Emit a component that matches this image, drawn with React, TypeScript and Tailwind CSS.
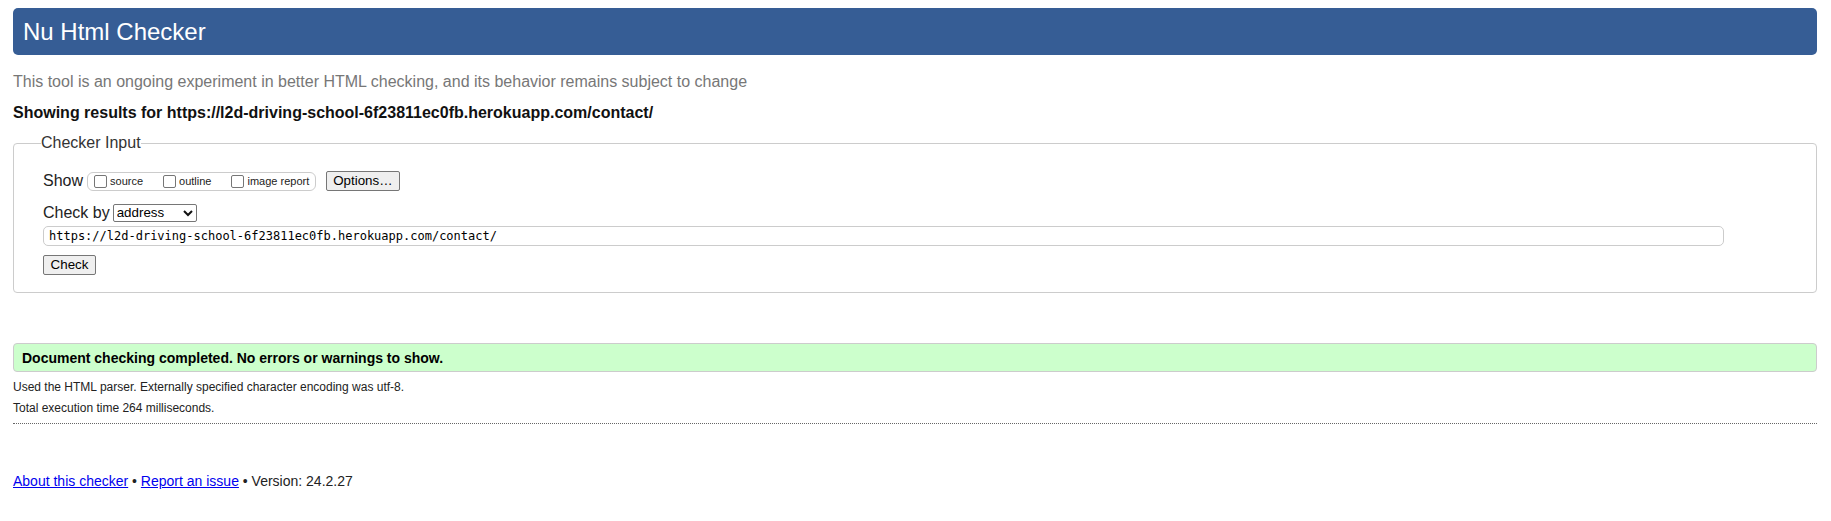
import { useState } from "react";

const checkUrl = "https://l2d-driving-school-6f23811ec0fb.herokuapp.com/contact/";

const showOptions = ["source", "outline", "image report"];

function ShowBox() {
  const [checked, setChecked] = useState<Record<string, boolean>>({});

  return (
    <div className="flex h-[19px] items-center gap-[20px] rounded-[6px] border border-[#cccccc] pl-[6px] pr-[6px]">
      {showOptions.map((name) => (
        <label key={name} className="flex items-center gap-[3px] text-[11px] leading-[13px] text-[#222]">
          <input
            type="checkbox"
            checked={!!checked[name]}
            onChange={() => setChecked((c) => ({ ...c, [name]: !c[name] }))}
            className="h-[13px] w-[13px] appearance-none rounded-[2px] border border-[#767676] bg-white"
          />
          {name}
        </label>
      ))}
    </div>
  );
}

export default function App() {
  const [url, setUrl] = useState(checkUrl);

  return (
    <div className="min-h-[521px] bg-white pl-[13px] pr-[14px] font-['Liberation_Sans',Arial,sans-serif] text-[#222]">
      <header className="mt-[8px] flex h-[47px] items-center rounded-[5px] bg-[#365d95] pl-[10px]">
        <h1 className="text-[24px] leading-[28px] text-white">Nu Html Checker</h1>
      </header>

      <p className="mt-[18px] text-[16px] leading-[18px] text-[#777]">
        This tool is an ongoing experiment in better HTML checking, and its behavior remains subject to change
      </p>
      <p className="mt-[13px] text-[16px] font-bold leading-[18px] text-[#111]">
        Showing results for {checkUrl}
      </p>

      <fieldset className="mt-[12px] rounded-[4px] border border-[#cccccc] pb-[17px] pl-[29px] pr-[29px] pt-[19px]">
        <legend className="-ml-[2px] text-[16px] leading-[18px] text-[#333]">Checker Input</legend>

        <div className="flex h-[20px] items-center">
          <span className="text-[16px] leading-[18px]">Show</span>
          <div className="ml-[4px]">
            <ShowBox />
          </div>
          <button
            type="button"
            className="ml-[10px] h-[20px] rounded-[2px] border border-[#767676] bg-[#efefef] px-[6px] text-[13.33px] leading-[16px] text-black"
          >
            Options…
          </button>
        </div>

        <div className="mt-[13px] flex h-[18px] items-center">
          <span className="text-[16px] leading-[18px]">Check by</span>
          <div className="relative ml-[3px] h-[18px] w-[84px] leading-[18px]">
            <select className="block h-[18px] w-full appearance-none rounded-[2px] border border-[#767676] bg-white pl-[3px] text-[13.33px] leading-[16px] text-black">
              <option>address</option>
              <option>file upload</option>
              <option>text input</option>
            </select>
            <svg
              className="pointer-events-none absolute right-[4px] top-[6px]"
              width="10"
              height="7"
              viewBox="0 0 10 7"
              fill="none"
            >
              <polyline points="1,1 5,5 9,1" stroke="#111" strokeWidth="2" />
            </svg>
          </div>
        </div>

        <input
          value={url}
          onChange={(e) => setUrl(e.target.value)}
          className="mt-[4px] block h-[20px] w-[1681px] rounded-[5px] border border-[#cccccc] px-[5px] font-['DejaVu_Sans_Mono','Liberation_Mono',monospace] text-[12px] text-black"
        />

        <button
          type="button"
          className="mt-[9px] block h-[20px] w-[53px] rounded-[2px] border border-[#767676] bg-[#efefef] text-[13.33px] leading-[16px] text-black"
        >
          Check
        </button>
      </fieldset>

      <div className="mt-[50px] flex h-[29px] items-center rounded-[4px] border border-[#cccccc] bg-[#ccffcc] pl-[8px]">
        <p className="text-[14px] font-bold leading-[16px] text-black">
          Document checking completed. No errors or warnings to show.
        </p>
      </div>

      <p className="mt-[8px] text-[12px] leading-[14px]">
        Used the HTML parser. Externally specified character encoding was utf-8.
      </p>
      <p className="mt-[7px] text-[12px] leading-[14px]">Total execution time 264 milliseconds.</p>

      <hr className="mt-[8px] border-0 border-t border-dotted border-t-[#666]" />

      <p className="mt-[49px] text-[14px] leading-[16px]">
        <a href="#" className="text-[#0000ee] underline">
          About this checker
        </a>{" "}
        •{" "}
        <a href="#" className="text-[#0000ee] underline">
          Report an issue
        </a>{" "}
        • Version: 24.2.27
      </p>
    </div>
  );
}
